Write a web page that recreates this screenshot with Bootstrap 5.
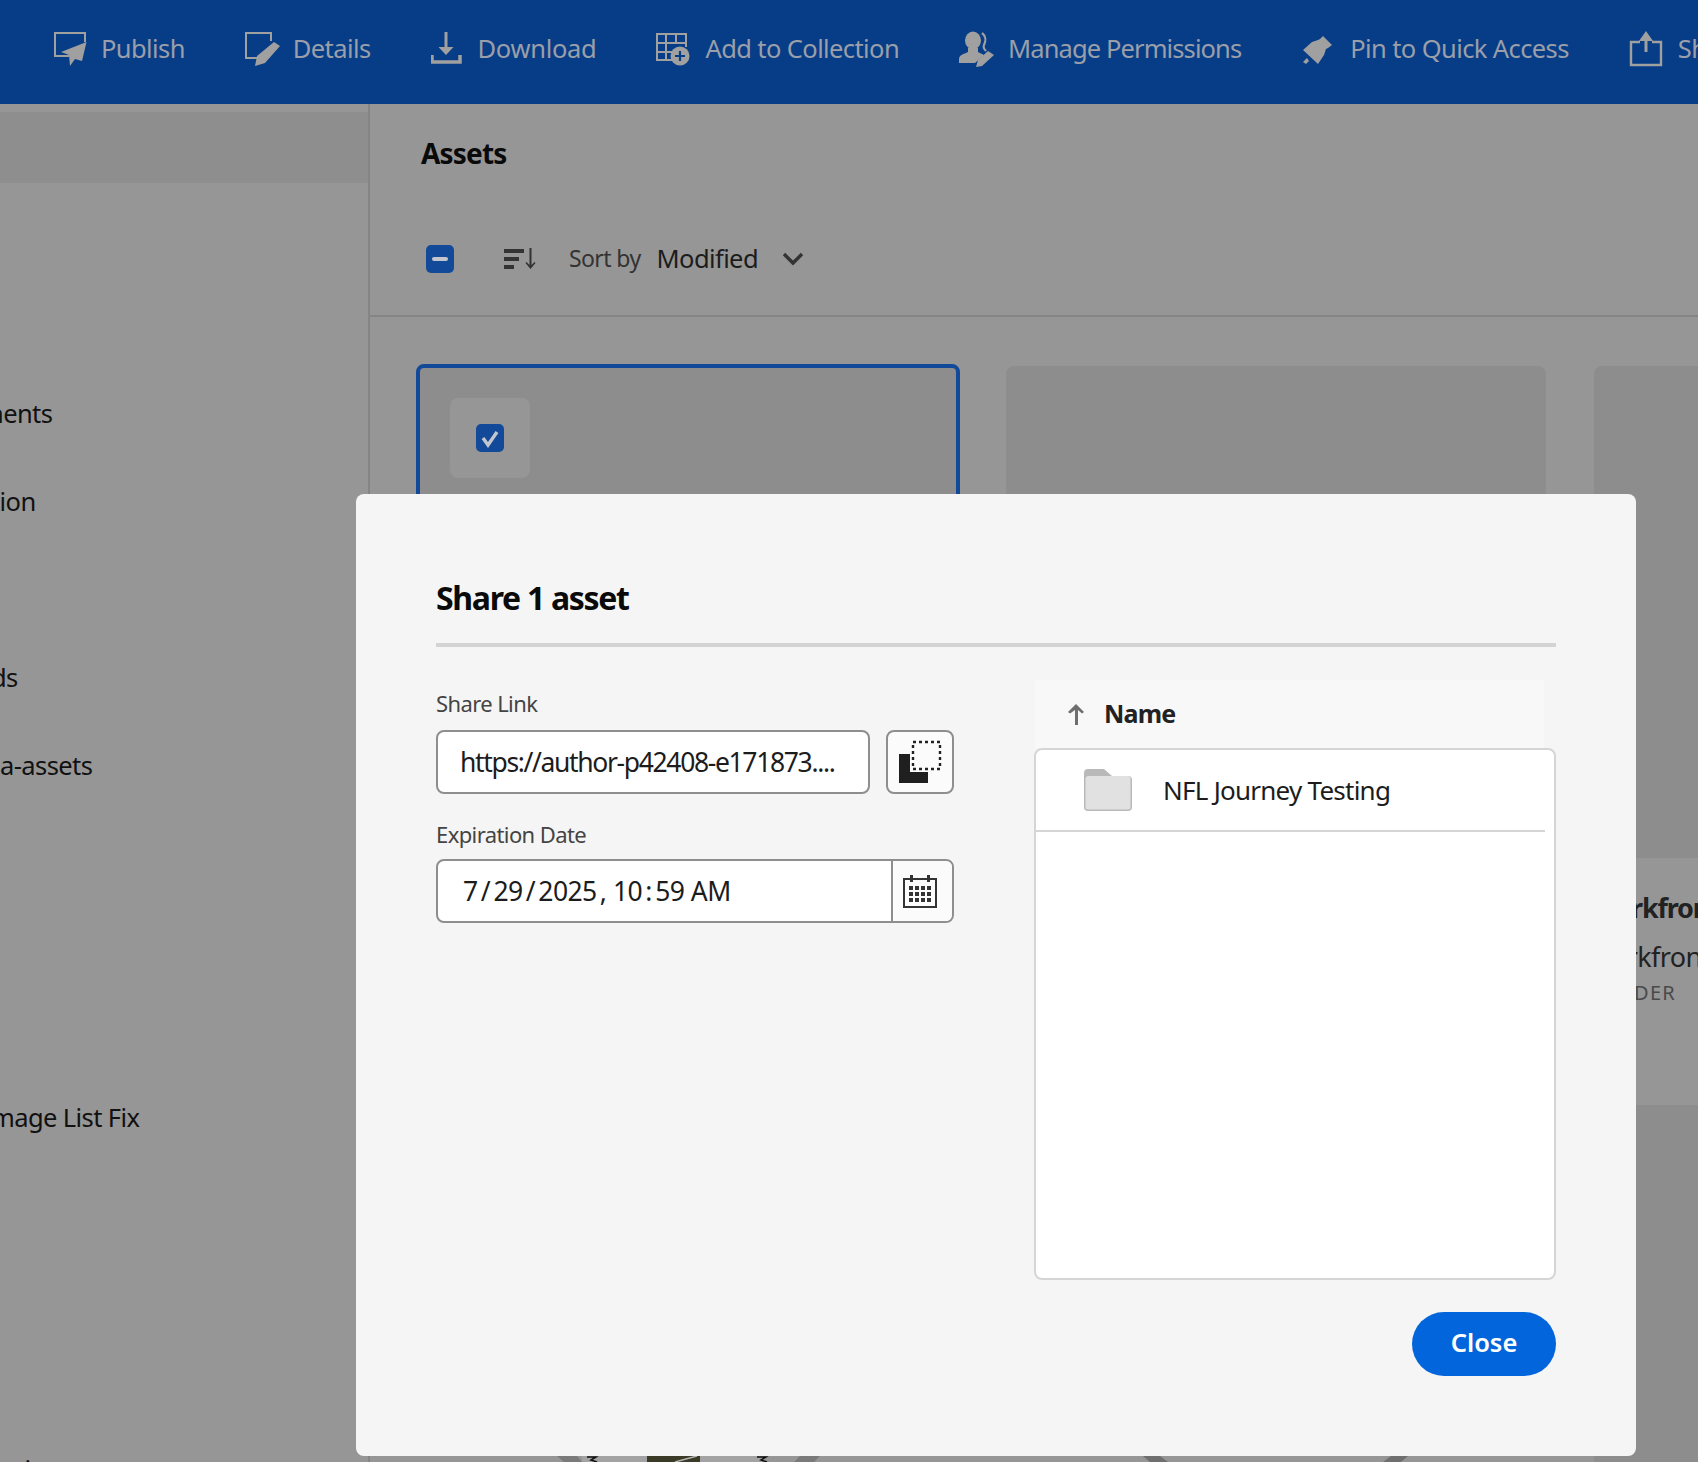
<!DOCTYPE html>
<html lang="en">
<head>
<meta charset="utf-8">
<title>Share 1 asset</title>
<link href="https://cdn.jsdelivr.net/npm/bootstrap@5.3.0/dist/css/bootstrap.min.css" rel="stylesheet">
<style>
html,body{height:1462px;overflow:hidden}
body{position:relative;background:#969696;font-family:"Noto Sans","Liberation Sans",sans-serif;color:#1c1c1c;letter-spacing:-.6px}
.topstrip{height:104px;background:#073d87;padding:0 0 8px 52px;gap:60px;white-space:nowrap;overflow:hidden;color:#9a9fa9;font-size:25.5px}
.topstrip svg{flex:none;display:block;margin-top:2px}
.topstrip .ti{gap:13px}
.permword{letter-spacing:-.9px}
.dlword{letter-spacing:-.3px}
.pagewrap{height:1358px}
.sidepane{width:370px;border-right:2px solid #858585;padding-top:8px;overflow:hidden;flex:none}
.sidesel{height:71px;background:#8e8e8e;margin-bottom:186px}
.siderow{height:88px;font-size:25.5px;color:#111;line-height:88px;white-space:nowrap;text-indent:-9px}
.siderow.deeprow{text-indent:-12px}
.siderow.flushrow{text-indent:0}
.siderow.insetrow{text-indent:16px}
.mainpane{min-width:0;overflow:hidden}
.assethead{height:213px;border-bottom:2px solid #858585;padding:27px 0 0 51px}
.assethead h2{font-size:28px;font-weight:700;color:#0a0a0a;line-height:44px;margin:0;letter-spacing:-.8px}
.sortline{margin:70px 0 0 5px;height:28px;font-size:23px;color:#333}
.boxblue{width:28px;height:28px;border-radius:5px;background:#124a99;flex:none}
.sorticon{margin-left:50px}
.sortcap{margin-left:32px;padding-bottom:2px}
.sortword{font-size:25.5px;color:#1c1c1c;margin:0 24px 0 16px;padding-bottom:2px}
.gridrow{padding:47px 0 0 46px;gap:46px}
.tile1{width:544px;height:500px;flex:none;border:4px solid #124a99;border-radius:8px;background:#8d8d8d;padding:30px}
.tile2{width:540px;flex:none;background:#8d8d8d;border-radius:8px;height:500px;margin:2px 2px 0 0}
.tile3{width:540px;flex:none;margin-top:2px}
.tile3top{height:492px;background:#8d8d8d;border-radius:8px 8px 0 0}
.tile3body{height:247px;background:#969696;padding-top:29px;white-space:nowrap}
.tile3rest{height:400px;background:#8d8d8d}
.t3a{font-size:27px;font-weight:700;color:#222;line-height:42px;margin-left:-3px;letter-spacing:-1.2px}
.t3b{font-size:27px;color:#222;line-height:42px;margin:7px 0 0 -7px}
.t3c{font-size:20px;color:#4a4a4a;letter-spacing:1.200px;line-height:30px;margin:0}
.checktile{width:80px;height:80px;border-radius:8px;background:#969696}
.sharedlg{position:absolute;left:356px;top:494px;width:1280px;height:962px;background:#f5f5f5;border-radius:8px;padding:80px 80px 0;z-index:5}
.sharedlg h1{font-size:32px;font-weight:700;line-height:48px;margin:0;color:#0a0a0a;letter-spacing:-1.3px}
.dlgrule{height:4px;background:#d3d3d3;margin-top:21px}
.dlgcols{margin-top:33px;gap:80px}
.leftcol{width:518px;padding-top:7px;flex:none}
.fieldcap{font-size:22px;line-height:32px;color:#444;display:block;margin:0}
.fieldcap.second{margin-top:24px}
.linkline{gap:16px;margin-top:11px}
.fieldbox{height:64px;border:2px solid #8e8e8e;border-radius:8px;background:#fff;font-size:26.5px;color:#1c1c1c;overflow:hidden;white-space:nowrap}
.linkbox{width:434px;padding-left:22px;line-height:60px;letter-spacing:-1.35px}
.copybtn{width:68px;height:64px;border:2px solid #8e8e8e;border-radius:8px;background:#fbfbfb;padding:0}
.datebox{margin-top:9px}
.datetxt{width:455px;padding-left:25px;line-height:60px;border-right:2px solid #8e8e8e;word-spacing:-3px}
.calcell{background:#fbfbfb;padding-right:5px}
.rightcol{width:522px;flex:none}
.namehead{height:68px;width:509px;margin-left:1px;background:#f8f8f8;padding:0 0 0 32px;gap:19px;font-size:25px;font-weight:700;color:#222;letter-spacing:-.8px}
.filebox{height:532px;border:2px solid #d5d5d5;border-radius:8px;background:#fff;overflow:hidden}
.filerow{height:82px;width:509px;border-bottom:2px solid #d5d5d5;padding-left:48px;gap:31px;font-size:26px;color:#1c1c1c;letter-spacing:-.75px}
.closewrap{margin-top:32px}
.closebtn{width:144px;height:64px;border-radius:32px;background:#0265dc;border:0;color:#fff;font-size:25.5px;font-weight:600;padding:0 0 4px}
.underbits{position:absolute;left:540px;top:1456px;z-index:1;display:block}
</style>
</head>
<body>
<header class="topstrip d-flex align-items-center">
  <div class="ti d-flex align-items-center">
    <svg width="36" height="36" viewBox="0 0 36 36" fill="none"><path d="M17 25H3V2H33V11" stroke="#a0a0a0" stroke-width="2"/><path d="M34.500 11 9 21l8 3 1 11 5-7 7 2z" fill="#a0a0a0"/></svg>
    <span>Publish</span>
  </div>
  <div class="ti d-flex align-items-center">
    <svg width="35" height="36" viewBox="1 0 35 36" fill="none"><path d="M14 27H2V2H27V10" stroke="#a0a0a0" stroke-width="2"/><path d="M30 11l6 4-15 17-10 3 2-10z" fill="#a0a0a0"/></svg>
    <span>Details</span>
  </div>
  <div class="ti d-flex align-items-center">
    <svg width="34" height="36" viewBox="2 0 34 36" fill="none"><path d="M15.500 1h3v15h6L17 24 9.500 16h6z" fill="#a0a0a0"/><path d="M3 24v7h28v-7" stroke="#a0a0a0" stroke-width="3.500"/></svg>
    <span class="dlword">Download</span>
  </div>
  <div class="ti d-flex align-items-center">
    <svg width="36" height="36" viewBox="1 0 36 36" fill="none"><path d="M17 29H2V3H31V16M2 12H31M11 3V29M21 3V12M2 21H17" stroke="#a0a0a0" stroke-width="2"/><circle cx="25" cy="25" r="9.500" fill="#a0a0a0"/><path d="M25 20v10M20 25h10" stroke="#073d87" stroke-width="2.200"/></svg>
    <span>Add to Collection</span>
  </div>
  <div class="ti d-flex align-items-center">
    <svg width="36" height="36" viewBox="0 0 36 36" fill="none"><ellipse cx="14" cy="9.500" rx="8" ry="9" fill="#a0a0a0"/><path d="M0 32v-4c0-4 5-5 9-7v-4h10v4c2 1 4 2 6 3l-9 8z" fill="#a0a0a0"/><path d="M23 2c4 3 4 8 2 12-1 2 0 4 2 6" stroke="#a0a0a0" stroke-width="2.200"/><path d="M29 20l6 4-12 11-6 1 2-7z" fill="#a0a0a0"/></svg>
    <span class="permword">Manage Permissions</span>
  </div>
  <div class="ti d-flex align-items-center">
    <svg width="36" height="36" viewBox="-1 -4 36 36" fill="none"><path d="M21 1l9 9-4 3-2 1-2 6-6 9L1 15l9-8 6-2 2-1z" fill="#a0a0a0"/><path d="M1 27l4-4 2 3-3 3z" fill="#a0a0a0"/></svg>
    <span>Pin to Quick Access</span>
  </div>
  <div class="ti d-flex align-items-center">
    <svg width="36" height="36" viewBox="1 0 36 36" fill="none"><path d="M12 11H3V34H33V11H24" stroke="#a0a0a0" stroke-width="2.400"/><path d="M16.500 10h3v11h-3zM18 0l7 10H11z" fill="#a0a0a0"/></svg>
    <span>Share</span>
  </div>
</header>

<div class="pagewrap d-flex">
  <aside class="sidepane">
    <div class="sidesel"></div>
    <div class="siderow deeprow">nents</div>
    <div class="siderow">tion</div>
    <div class="siderow"></div>
    <div class="siderow">ds</div>
    <div class="siderow flushrow">a-assets</div>
    <div class="siderow"></div>
    <div class="siderow"></div>
    <div class="siderow"></div>
    <div class="siderow">mage List Fix</div>
    <div class="siderow"></div>
    <div class="siderow"></div>
    <div class="siderow"></div>
    <div class="siderow insetrow">ti</div>
  </aside>
  <main class="mainpane flex-grow-1">
    <div class="assethead">
      <h2>Assets</h2>
      <div class="sortline d-flex align-items-center">
        <span class="boxblue d-flex align-items-center justify-content-center">
          <svg width="28" height="28" viewBox="0 0 28 28"><rect x="6" y="12" width="16" height="4" rx="2" fill="#c3c6cc"/></svg>
        </span>
        <svg class="sorticon" width="33" height="22" viewBox="0 0 33 22" fill="#333"><rect y="1" width="20" height="4"/><rect y="9" width="15" height="4"/><rect y="17" width="10" height="4"/><path d="M25.500 0h2v17l3-3 1 1-5 6-5-6 1-1 3 3z"/></svg>
        <span class="sortcap">Sort by</span>
        <span class="sortword">Modified</span>
        <svg width="22" height="14" viewBox="0 0 22 14" fill="none"><path d="M2 2l9 9 9-9" stroke="#333" stroke-width="3.400"/></svg>
      </div>
    </div>
    <div class="gridrow d-flex">
      <div class="tile1">
        <div class="checktile d-flex align-items-center justify-content-center">
          <svg class="boxblue" width="28" height="28" viewBox="0 0 28 28" fill="none"><path d="M7 14l5 7 9-13" stroke="#c3c6cc" stroke-width="3.400"/></svg>
        </div>
      </div>
      <div class="tile2"></div>
      <div class="tile3">
        <div class="tile3top"></div>
        <div class="tile3body">
          <div class="t3a">Workfront</div>
          <div class="t3b">Workfront</div>
          <div class="t3c">FOLDER</div>
        </div>
        <div class="tile3rest"></div>
      </div>
    </div>
  </main>
</div>

<svg class="underbits" width="880" height="6" viewBox="0 0 880 6" fill="none" aria-hidden="true">
  <path d="M17 0h20l5 6H24z" fill="#7a7a7a"/>
  <rect x="42" width="180" height="6" fill="#a3a3a3"/>
  <path d="M47 1h9l-5 3 6 2" stroke="#111" stroke-width="1.500"/>
  <rect x="107" width="53" height="6" fill="#3a3a26"/>
  <path d="M135 6l22-6" stroke="#b5b5b5" stroke-width="1.500"/>
  <path d="M217 1h9l-5 3 6 2" stroke="#111" stroke-width="1.500"/>
  <path d="M280 0h-20l-6 6h20z" fill="#7a7a7a"/>
  <path d="M603 0h17l8 6h-18z" fill="#6f6f6f"/>
  <path d="M868 0h-17l-8 6h18z" fill="#6f6f6f"/>
</svg>

<section class="sharedlg" role="dialog" aria-label="Share 1 asset">
  <h1>Share 1 asset</h1>
  <div class="dlgrule"></div>
  <div class="dlgcols d-flex">
    <div class="leftcol">
      <label class="fieldcap">Share Link</label>
      <div class="linkline d-flex">
        <div class="fieldbox linkbox">https://author-p42408-e171873....</div>
        <button class="copybtn d-flex align-items-center justify-content-center" type="button" aria-label="Copy">
          <svg width="46" height="46" viewBox="0 0 46 46" fill="none"><rect x="16" y="3" width="27" height="27" stroke="#222" stroke-width="2.400" stroke-dasharray="3 3"/><path d="M2 15H13V33H31V44H2z" fill="#1f1f1f"/></svg>
        </button>
      </div>
      <label class="fieldcap second">Expiration Date</label>
      <div class="fieldbox datebox d-flex">
        <div class="datetxt">7 / 29 / 2025 , &nbsp;10 : 59 &nbsp;AM</div>
        <div class="calcell flex-grow-1 d-flex align-items-center justify-content-center">
          <svg width="34" height="34" viewBox="0 0 34 34" fill="none"><rect x="1" y="5" width="32" height="28" stroke="#333" stroke-width="2"/><rect x="7" y="1" width="3" height="7" fill="#333"/><rect x="24" y="1" width="3" height="7" fill="#333"/><g fill="#333"><rect x="6" y="12" width="4" height="4"/><rect x="12" y="12" width="4" height="4"/><rect x="18" y="12" width="4" height="4"/><rect x="24" y="12" width="4" height="4"/><rect x="6" y="18" width="4" height="4"/><rect x="12" y="18" width="4" height="4"/><rect x="18" y="18" width="4" height="4"/><rect x="24" y="18" width="4" height="4"/><rect x="6" y="24" width="4" height="4"/><rect x="12" y="24" width="4" height="4"/><rect x="18" y="24" width="4" height="4"/><rect x="24" y="24" width="4" height="4"/></g></svg>
        </div>
      </div>
    </div>
    <div class="rightcol">
      <div class="namehead d-flex align-items-center">
        <svg width="18" height="21" viewBox="0 0 18 21" fill="#6e6e6e"><path d="M9 0l8 8-2 1.500-4-3.500V21H8V6L3 9.500 1 8z"/></svg>
        <span>Name</span>
      </div>
      <div class="filebox">
        <div class="filerow d-flex align-items-center">
          <svg width="48" height="42" viewBox="0 0 48 42"><path d="M0 4a4 4 0 014-4h16l8 7h16a4 4 0 014 4v27a4 4 0 01-4 4H4a4 4 0 01-4-4z" fill="#b9b9b9"/><path d="M1.500 10a3 3 0 013-3H44a2.500 2.500 0 012.500 2.500V38a2.500 2.500 0 01-2.500 2.500H4A2.500 2.500 0 011.500 38z" fill="#e1e1e1"/></svg>
          <span>NFL Journey Testing</span>
        </div>
      </div>
      <div class="closewrap d-flex justify-content-end">
        <button class="closebtn" type="button">Close</button>
      </div>
    </div>
  </div>
</section>
<script src="https://cdn.jsdelivr.net/npm/bootstrap@5.3.0/dist/js/bootstrap.bundle.min.js"></script>
</body>
</html>
